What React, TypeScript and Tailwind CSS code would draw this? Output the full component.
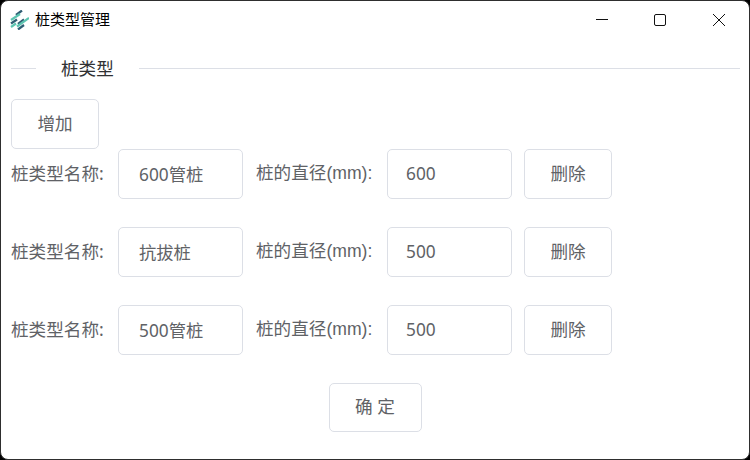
const FONT = "font-['Noto_Sans','Noto_Sans_CJK_SC',sans-serif]";

const PILES = [
  { name: "600管桩", diameter: "600" },
  { name: "抗拔桩", diameter: "500" },
  { name: "500管桩", diameter: "500" },
];

function Logo() {
  return (
    <svg width="20" height="20" viewBox="9 9 20 20" fill="none" strokeWidth="2.200">
      <path d="M16 14 L22 9.500" stroke="#2f5d73" />
      <path d="M11 19 L20 13" stroke="#5cc4b0" />
      <path d="M11 22.500 L17 18.500" stroke="#2f5d73" />
      <path d="M11 26 L16 22.500" stroke="#5cc4b0" />
      <path d="M18 23 L24 18.500" stroke="#2f5d73" />
      <path d="M17 25.500 L29 17" stroke="#5cc4b0" />
      <path d="M18 28.500 L24 24" stroke="#2f5d73" />
    </svg>
  );
}

function TextBox({ value, className }: { value: string; className: string }) {
  return (
    <input
      readOnly
      value={value}
      className={`h-[50px] w-[125px] rounded-[5px] border border-[#dcdfe6] bg-white pb-[2px] text-[17.3px] text-[#606266] outline-none ${className}`}
    />
  );
}

function Button({ label, width }: { label: string; width: string }) {
  return (
    <button className={`h-[50px] ${width} rounded-[5px] border border-[#dcdfe6] bg-white pb-[2px] text-[17.6px] text-[#606266]`}>
      {label}
    </button>
  );
}

export default function App() {
  return (
    <div className={`h-[460px] w-[750px] bg-black ${FONT}`}>
      <div className="flex h-full flex-col rounded-[8px] border border-[#2e2e2e] bg-white">
        {/* 标题栏 */}
        <div className="flex h-[37px] items-center pl-[8px]">
          <Logo />
          <span className="ml-[6px] text-[15px] text-black">桩类型管理</span>
          <div className="ml-auto flex items-center">
            <svg width="46" height="37" viewBox="0 0 46 37" fill="none" stroke="#111" strokeWidth="1">
              <path d="M17 18.500 H29" />
            </svg>
            <svg width="46" height="37" viewBox="0 0 46 37" fill="none" stroke="#111" strokeWidth="1" className="ml-[12px]">
              <rect x="17.500" y="13.500" width="11" height="11" rx="1.500" />
            </svg>
            <svg width="46" height="37" viewBox="0 0 46 37" fill="none" stroke="#111" strokeWidth="1" className="ml-[13px] mr-[7px]">
              <path d="M17 13 L29 25 M29 13 L17 25" />
            </svg>
          </div>
        </div>

        {/* 分隔标题 */}
        <div className="mt-[20px] flex h-[20px] items-center pl-[10px] pr-[9px]">
          <div className="h-px w-[25px] bg-[#dcdfe6]" />
          <span className="px-[25px] text-[17.6px] text-[#303133]">桩类型</span>
          <div className="h-px flex-1 bg-[#dcdfe6]" />
        </div>

        <div className="mt-[21px] pl-[10px]">
          <Button label="增加" width="w-[88px]" />
        </div>

        <div className="flex flex-col gap-[28px] pl-[10px]">
          {PILES.map((pile) => (
            <div key={pile.name} className="flex items-center text-[17.6px] text-[#606266]">
              <span className="w-[107px] pb-[2px]">桩类型名称:</span>
              <TextBox value={pile.name} className="pl-[20px]" />
              <span className="ml-[13px] w-[131px] pb-[2px] font-['Liberation_Sans','Noto_Sans_CJK_SC',sans-serif]">桩的直径(mm):</span>
              <TextBox value={pile.diameter} className="pl-[18px]" />
              <div className="ml-[12px]">
                <Button label="删除" width="w-[88px]" />
              </div>
            </div>
          ))}
        </div>

        <div className="mt-[28px] flex justify-center">
          <button className="h-[49px] w-[93px] rounded-[5px] border border-[#dcdfe6] bg-white pb-[2px] text-[17.6px] text-[#606266]">
            确 定
          </button>
        </div>
      </div>
    </div>
  );
}
